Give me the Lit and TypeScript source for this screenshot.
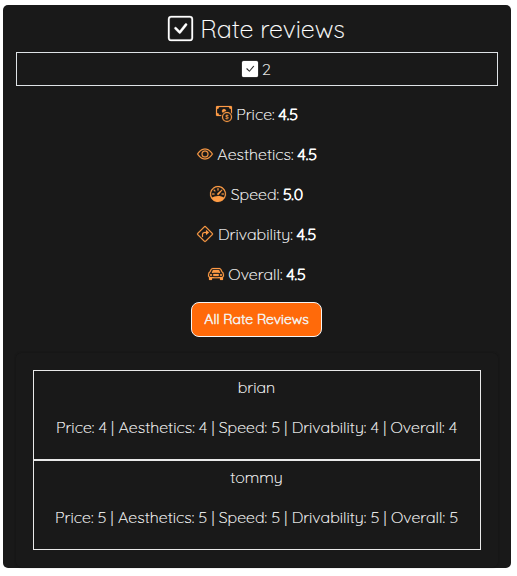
import { LitElement, html, css, svg } from "lit";
import { customElement, property } from "lit/decorators.js";

const ICONS: Record<string, string[]> = {
  check: [
    "M14 1a1 1 0 0 1 1 1v12a1 1 0 0 1-1 1H2a1 1 0 0 1-1-1V2a1 1 0 0 1 1-1zM2 0a2 2 0 0 0-2 2v12a2 2 0 0 0 2 2h12a2 2 0 0 0 2-2V2a2 2 0 0 0-2-2z",
    "M10.97 4.97a.75.75 0 0 1 1.071 1.05l-3.992 4.99a.75.75 0 0 1-1.08.02L4.324 8.384a.75.75 0 1 1 1.06-1.06l2.094 2.093 3.473-4.425z",
  ],
  checkFill: [
    "M1.5 0A1.5 1.5 0 0 0 0 1.5v13A1.5 1.5 0 0 0 1.5 16h13a1.5 1.5 0 0 0 1.5-1.5v-13A1.5 1.5 0 0 0 14.5 0zM11.1 5a.6.6 0 0 1 .86.84l-4.1 4.75a.6.6 0 0 1-.86.02L4.5 8.2a.6.6 0 1 1 .85-.85L7.4 9.4z",
  ],
  cash: [
    "M11 15a4 4 0 1 0 0-8 4 4 0 0 0 0 8m5-4a5 5 0 1 1-10 0 5 5 0 0 1 10 0",
    "M9.438 11.944c.047.596.518 1.06 1.363 1.116v.44h.375v-.443c.875-.061 1.386-.529 1.386-1.207 0-.618-.39-.936-1.09-1.1l-.296-.07v-1.2c.376.043.614.248.671.532h.658c-.047-.575-.54-1.024-1.329-1.073V8.5h-.375v.45c-.747.073-1.255.522-1.255 1.158 0 .562.378.92 1.007 1.066l.248.061v1.272c-.384-.058-.639-.27-.696-.563h-.668zm1.36-1.354c-.369-.085-.569-.26-.569-.522 0-.294.216-.514.572-.578v1.1zm.432.746c.449.104.655.272.655.569 0 .339-.257.571-.709.614v-1.195z",
    "M1 0a1 1 0 0 0-1 1v8a1 1 0 0 0 1 1h4.083q.088-.517.258-1H3a2 2 0 0 0-2-2V3a2 2 0 0 0 2-2h10a2 2 0 0 0 2 2v3.528c.38.34.717.728 1 1.154V1a1 1 0 0 0-1-1z",
    "M9.998 5.083 10 5a2 2 0 1 0-3.132 1.65 6 6 0 0 1 3.13-1.567",
  ],
  eye: [
    "M16 8s-3-5.5-8-5.5S0 8 0 8s3 5.5 8 5.5S16 8 16 8M1.173 8a13 13 0 0 1 1.66-2.043C4.12 4.668 5.88 3.5 8 3.5s3.879 1.168 5.168 2.457A13 13 0 0 1 14.828 8q-.086.13-.195.288c-.335.48-.83 1.12-1.465 1.755C11.879 11.332 10.119 12.5 8 12.5s-3.879-1.168-5.168-2.457A13 13 0 0 1 1.172 8z",
    "M8 5.5a2.5 2.5 0 1 0 0 5 2.5 2.5 0 0 0 0-5M4.5 8a3.5 3.5 0 1 1 7 0 3.5 3.5 0 0 1-7 0",
  ],
  speed: [
    "M8 2a.5.5 0 0 1 .5.5V4a.5.5 0 0 1-1 0V2.5A.5.5 0 0 1 8 2M3.732 3.732a.5.5 0 0 1 .707 0l.915.914a.5.5 0 1 1-.708.708l-.914-.915a.5.5 0 0 1 0-.707M2 8a.5.5 0 0 1 .5-.5h1.586a.5.5 0 0 1 0 1H2.5A.5.5 0 0 1 2 8m9.5 0a.5.5 0 0 1 .5-.5h1.5a.5.5 0 0 1 0 1H12a.5.5 0 0 1-.5-.5m.754-4.246a.39.39 0 0 0-.527-.02L7.547 7.31A.91.91 0 1 0 8.85 8.569l3.434-4.297a.39.39 0 0 0-.029-.518z",
    "M6.664 15.889A8 8 0 1 1 9.336.11a8 8 0 0 1-2.672 15.78zm-4.665-4.283A11.95 11.95 0 0 1 8 10c2.186 0 4.236.585 6.001 1.606a7 7 0 1 0-12.002 0",
  ],
  turn: [
    "M5 8.5A2.5 2.5 0 0 1 7.5 6H9V4.534a.25.25 0 0 1 .41-.192l2.36 1.966c.12.1.12.284 0 .384L9.41 8.658A.25.25 0 0 1 9 8.466V7H7.5A1.5 1.5 0 0 0 6 8.5V11H5z",
    "M6.95.435c.58-.58 1.52-.58 2.1 0l6.515 6.516c.58.58.58 1.519 0 2.098L9.05 15.565c-.58.58-1.519.58-2.098 0L.435 9.05a1.48 1.48 0 0 1 0-2.098zm1.4.7a.495.495 0 0 0-.7 0L1.134 7.65a.495.495 0 0 0 0 .7l6.516 6.516a.495.495 0 0 0 .7 0l6.516-6.516a.495.495 0 0 0 0-.7L8.35 1.134z",
  ],
  car: [
    "M4 9a1 1 0 1 1-2 0 1 1 0 0 1 2 0m10 0a1 1 0 1 1-2 0 1 1 0 0 1 2 0M6 8a1 1 0 0 0 0 2h4a1 1 0 1 0 0-2zM4.862 4.276 3.906 6.19a.51.51 0 0 0 .497.731c.91-.073 2.35-.17 3.597-.17s2.688.097 3.597.17a.51.51 0 0 0 .497-.731l-.956-1.913A.5.5 0 0 0 10.691 4H5.309a.5.5 0 0 0-.447.276",
    "M2.52 3.515A2.5 2.5 0 0 1 4.82 2h6.362c1 0 1.904.596 2.298 1.515l.792 1.848c.075.175.21.319.38.404.5.25.855.715.965 1.262l.335 1.679q.05.242.049.49v.413c0 .814-.39 1.543-1 1.997V13.5a.5.5 0 0 1-.5.5h-2a.5.5 0 0 1-.5-.5v-1.338c-1.292.048-2.745.088-4 .088s-2.708-.04-4-.088V13.5a.5.5 0 0 1-.5.5h-2a.5.5 0 0 1-.5-.5v-1.892c-.61-.454-1-1.183-1-1.997v-.413a2.5 2.5 0 0 1 .049-.49l.335-1.68c.11-.546.465-1.012.964-1.261a.8.8 0 0 0 .381-.404zM4.82 3a1.5 1.5 0 0 0-1.379.91l-.792 1.847a1.8 1.8 0 0 1-.853.904.8.8 0 0 0-.43.564L1.03 8.904a1.5 1.5 0 0 0-.03.294v.413c0 .796.62 1.448 1.408 1.484 1.555.07 3.786.155 5.592.155s4.037-.084 5.592-.155A1.48 1.48 0 0 0 15 9.611v-.413q0-.148-.03-.294l-.335-1.68a.8.8 0 0 0-.43-.563 1.8 1.8 0 0 1-.853-.904l-.792-1.848A1.5 1.5 0 0 0 11.18 3z",
  ],
};

@customElement("bi-icon")
export class BiIcon extends LitElement {
  @property() name = "check";
  static styles = css`
    :host { display: block; flex: none; width: 1em; height: 1em; }
    .glyph { display: block; width: 100%; height: 100%; overflow: visible; fill: currentColor; fill-rule: evenodd; stroke: currentColor; stroke-width: 0.2; }
  `;
  render() {
    return html`<svg class="glyph" viewBox="0 0 16 16">${ICONS[this.name].map((d) => svg`<path d=${d}></path>`)}</svg>`;
  }
}

const RATINGS = [
  { icon: "cash", label: "Price:", score: "4.5" },
  { icon: "eye", label: "Aesthetics:", score: "4.5" },
  { icon: "speed", label: "Speed:", score: "5.0" },
  { icon: "turn", label: "Drivability:", score: "4.5" },
  { icon: "car", label: "Overall:", score: "4.5" },
];

const REVIEWS = [
  { user: "brian", text: "Price: 4 | Aesthetics: 4 | Speed: 5 | Drivability: 4 | Overall: 4" },
  { user: "tommy", text: "Price: 5 | Aesthetics: 5 | Speed: 5 | Drivability: 5 | Overall: 5" },
];

@customElement("app-root")
export class AppRoot extends LitElement {
  static styles = css`
    :host { display: block; height: 576px; background: #fff; box-sizing: border-box; padding: 5px 6px 8px 3px;
      font: 300 16px/24px Quicksand, Lato, sans-serif; color: #fff; -webkit-text-stroke: 0.15px currentColor; }
    * { box-sizing: border-box; }
    .card { height: 563px; background: #191919; border-radius: 5px; padding: 8px 13px 0; display: flex; flex-direction: column; }
    .title { margin: 0; height: 32px; display: flex; justify-content: center; align-items: center; gap: 6px; font-size: 25px; font-weight: 300; line-height: 32px; }
    .title-icon { margin: 0 1px 1px -1px; }
    .count { margin-top: 7px; height: 34px; border: 1px solid #dee2e6; display: flex; justify-content: center; align-items: center; gap: 4px; padding-right: 1px; }
    .ratings { display: flex; flex-direction: column; align-items: center; gap: 16px; margin-top: 16px; }
    .rating { height: 24px; display: flex; align-items: center; gap: 4px; }
    .accent { color: #ff9c45; margin: 0 0.7px 1px -0.7px; }
    .score { -webkit-text-stroke: 0.8px currentColor; }
    .all { align-self: center; margin: 16px 1px 0 0; height: 35px; width: 131px; border: 1px solid #f4f4f4; border-radius: 8px; background: #ff6a0a; color: #f4eeea; font: 300 14px/21px Quicksand, Lato, sans-serif; -webkit-text-stroke: 0.7px currentColor; padding: 0; white-space: nowrap; }
    .panel { margin-top: 16px; height: 214px; padding: 17px; border-radius: 5px; box-shadow: 0 0 2px #111; }
    .review { height: 90px; border: 1px solid #e9e9e9; padding-top: 4px; text-align: center; white-space: nowrap; }
    .line { margin: 0 1px 16px 0; }
  `;
  render() {
    return html`
      <section class="card">
        <h3 class="title"><bi-icon class="title-icon" name="check"></bi-icon><span>Rate reviews</span></h3>
        <div class="count"><bi-icon name="checkFill"></bi-icon><span>2</span></div>
        <div class="ratings">
          ${RATINGS.map((r) => html`<div class="rating"><bi-icon class="accent" name=${r.icon}></bi-icon><span>${r.label}</span><span class="score">${r.score}</span></div>`)}
        </div>
        <button class="all">All Rate Reviews</button>
        <div class="panel">
          ${REVIEWS.map((r) => html`<div class="review"><p class="line">${r.user}</p><p class="line">${r.text}</p></div>`)}
        </div>
      </section>
    `;
  }
}
